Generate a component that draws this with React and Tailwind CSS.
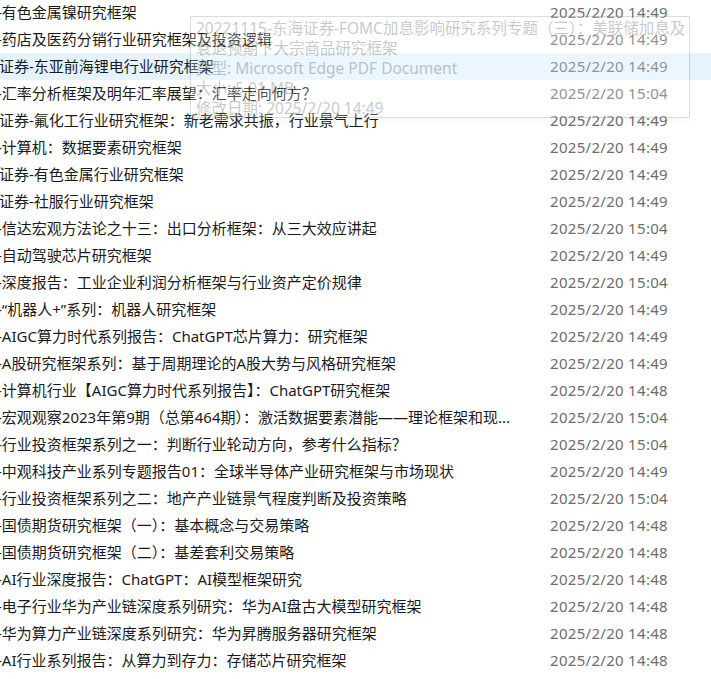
import React from "react";

const rows = [
  ["-有色金属镍研究框架", "2025/2/20 14:49"],
  ["-药店及医药分销行业研究框架及投资逻辑", "2025/2/20 14:49"],
  ["证券-东亚前海锂电行业研究框架", "2025/2/20 14:49", true],
  ["-汇率分析框架及明年汇率展望：汇率走向何方？", "2025/2/20 15:04"],
  ["证券-氟化工行业研究框架：新老需求共振，行业景气上行", "2025/2/20 14:49"],
  ["-计算机：数据要素研究框架", "2025/2/20 14:49"],
  ["证券-有色金属行业研究框架", "2025/2/20 14:49"],
  ["证券-社服行业研究框架", "2025/2/20 14:49"],
  ["-信达宏观方法论之十三：出口分析框架：从三大效应讲起", "2025/2/20 15:04"],
  ["-自动驾驶芯片研究框架", "2025/2/20 14:49"],
  ["-深度报告：工业企业利润分析框架与行业资产定价规律", "2025/2/20 15:04"],
  ["-“机器人+”系列：机器人研究框架", "2025/2/20 14:49"],
  ["-AIGC算力时代系列报告：ChatGPT芯片算力：研究框架", "2025/2/20 14:49"],
  ["-A股研究框架系列：基于周期理论的A股大势与风格研究框架", "2025/2/20 14:49"],
  ["-计算机行业【AIGC算力时代系列报告】：ChatGPT研究框架", "2025/2/20 14:48"],
  ["-宏观观察2023年第9期（总第464期）：激活数据要素潜能——理论框架和现...", "2025/2/20 15:04"],
  ["-行业投资框架系列之一：判断行业轮动方向，参考什么指标？", "2025/2/20 15:04"],
  ["-中观科技产业系列专题报告01：全球半导体产业研究框架与市场现状", "2025/2/20 14:49"],
  ["-行业投资框架系列之二：地产产业链景气程度判断及投资策略", "2025/2/20 15:04"],
  ["-国债期货研究框架（一）：基本概念与交易策略", "2025/2/20 14:48"],
  ["-国债期货研究框架（二）：基差套利交易策略", "2025/2/20 14:48"],
  ["-AI行业深度报告：ChatGPT：AI模型框架研究", "2025/2/20 14:48"],
  ["-电子行业华为产业链深度系列研究：华为AI盘古大模型研究框架", "2025/2/20 14:48"],
  ["-华为算力产业链深度系列研究：华为昇腾服务器研究框架", "2025/2/20 14:48"],
  ["-AI行业系列报告：从算力到存力：存储芯片研究框架", "2025/2/20 14:48"],
];

const font = { fontFamily: '"Noto Sans", "Noto Sans CJK SC", sans-serif' };

export default function App() {
  return (
    <div
      className="relative w-[711px] h-[679px] overflow-hidden bg-white text-[15px]"
      style={font}
    >
      <div className="-mt-px flex flex-col">
        {rows.map(([name, date, sel], i) => (
          <div
            key={i}
            className={`flex h-[27px] items-center ${sel ? "bg-[#e5f3ff]" : ""}`}
          >
            <div className="w-[550px] shrink-0 overflow-hidden">
              <span
                className={`block whitespace-nowrap text-[#1b1b1b] ${
                  name.startsWith("-") ? "-ml-[3px]" : "-ml-px"
                }`}
              >
                {name}
              </span>
            </div>
            <span className="whitespace-nowrap tracking-[0.3px] text-[#6d6d6d]">
              {date}
            </span>
          </div>
        ))}
      </div>

      {/* fading tooltip */}
      <div className="absolute left-[190px] top-[16px] w-[500px] h-[102px] border border-[#767676] bg-white px-[5px] pt-[1px] text-[15.5px] leading-[20px] text-[#2b2b2b] shadow-md opacity-25">
        <div className="whitespace-nowrap">
          20221115-东海证券-FOMC加息影响研究系列专题（三）：美联储加息及
        </div>
        <div>衰退预期下大宗商品研究框架</div>
        <div>类型: Microsoft Edge PDF Document</div>
        <div>大小: 5.01 MB</div>
        <div>修改日期: 2025/2/20 14:49</div>
      </div>
    </div>
  );
}
